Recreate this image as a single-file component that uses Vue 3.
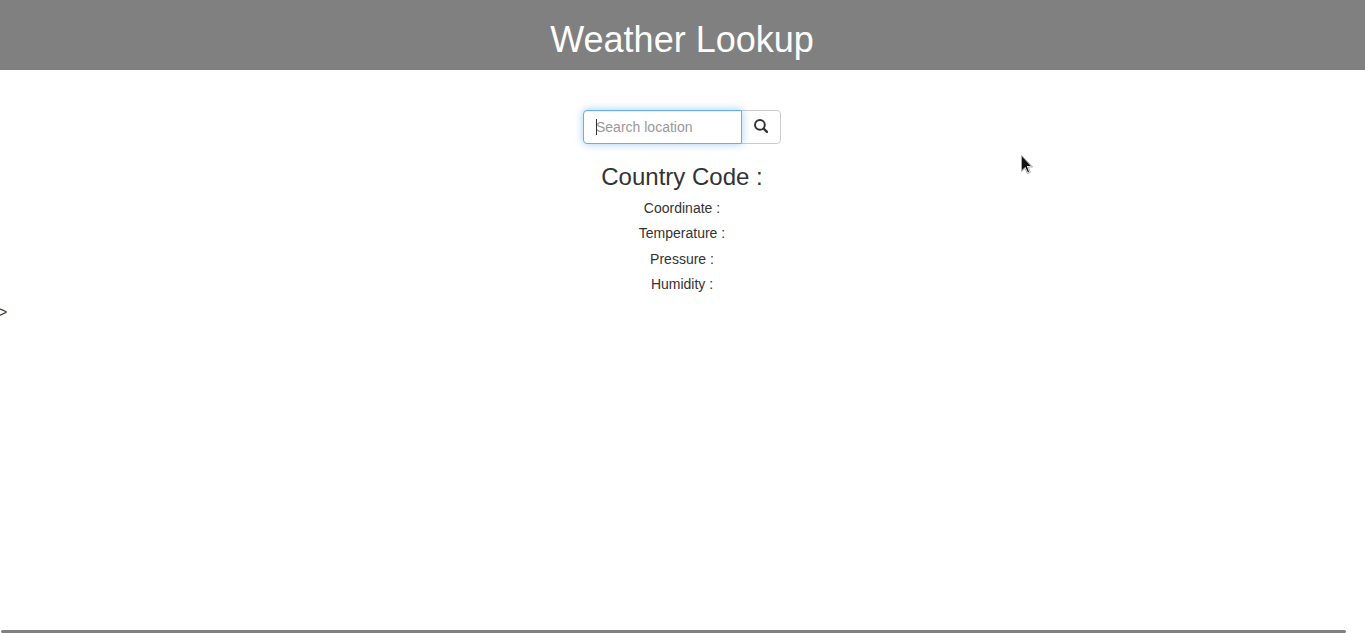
<script setup>
import { onMounted, ref } from 'vue'

const query = ref('')
const field = ref(null)
const details = ['Coordinate', 'Temperature', 'Pressure', 'Humidity']

onMounted(() => field.value.focus())
</script>

<template>
  <div class="page">
    <header class="banner">
      <h1>Weather Lookup</h1>
    </header>

    <main>
      <form class="search" @submit.prevent>
        <div class="field">
          <input ref="field" v-model="query" type="text" placeholder="Search location" aria-label="Search location">
          <span v-if="!query" class="caret"></span>
        </div>
        <button type="submit" aria-label="Search">
          <svg viewBox="0 0 14 14" width="14" height="14" aria-hidden="true">
            <circle cx="5.9" cy="5.9" r="4.9" fill="none" stroke="currentColor" stroke-width="1.9" />
            <path d="M9.6 9.6 L13 12.9" fill="none" stroke="currentColor" stroke-width="2.3" stroke-linecap="round" />
          </svg>
        </button>
      </form>

      <section class="result">
        <h3>Country Code :</h3>
        <h5 v-for="label in details" :key="label">{{ label }} :</h5>
      </section>
      <div class="stray">&gt;</div>
    </main>

    <div class="track"></div>

    <svg class="pointer" viewBox="0 0 14 21" width="14" height="21" aria-hidden="true">
      <path d="M1.5 1.5 V17.5 L5 14.3 L7.4 19.5 L10.4 18.3 L8.2 13 H12.6 Z" fill="#fff" stroke="#aaa" stroke-width="1" />
      <path d="M2 2.5 V16 L5.3 12.9 L7.9 18.2 L9 17.7 L6.8 12 H10.8 Z" fill="#111" />
    </svg>
  </div>
</template>

<style>
body {
  margin: 0;
}
</style>

<style scoped>
.page {
  position: relative;
  display: flex;
  flex-direction: column;
  box-sizing: border-box;
  min-height: 100vh;
  margin-left: -1px;
  background: #fff;
  color: #333;
  font: 14px/20px "Liberation Sans", Arial, sans-serif;
}

h1,
h3,
h5 {
  margin: 0;
  font-weight: 400;
  line-height: 1.1;
}

.banner {
  padding: 20px 0 10px;
  background: #808080;
  color: #fff;
  text-align: center;
}

h1 {
  font-size: 36px;
}

main {
  flex: 1;
  padding-top: 40px;
}

.search {
  display: flex;
  justify-content: center;
}

.field {
  position: relative;
  z-index: 1;
}

input {
  display: block;
  box-sizing: border-box;
  width: 159px;
  height: 34px;
  padding: 6px 12px;
  border: 1px solid #66afe9;
  border-radius: 4px 0 0 4px;
  outline: 0;
  background: #fff;
  box-shadow: inset 0 1px 1px rgba(0, 0, 0, 0.075), 0 0 8px rgba(102, 175, 233, 0.6);
  color: #555;
  caret-color: transparent;
  font: inherit;
}

input::placeholder {
  color: #999;
  opacity: 1;
}

.caret {
  position: absolute;
  top: 9px;
  left: 13px;
  width: 1px;
  height: 16px;
  background: #333;
  pointer-events: none;
}

button {
  display: flex;
  align-items: center;
  justify-content: center;
  box-sizing: border-box;
  width: 40px;
  height: 34px;
  margin-left: -1px;
  padding: 0 0 2px;
  border: 1px solid #ccc;
  border-radius: 0 4px 4px 0;
  background: #fff;
  color: #333;
}

.result {
  padding-top: 20px;
  text-align: center;
}

h3 {
  margin-bottom: 11px;
  font-size: 24px;
}

h5 {
  margin-bottom: 10px;
  font-size: 14px;
}

h5:last-child {
  margin-bottom: 9px;
}

.track {
  height: 3px;
  margin: 0 19px 0 2px;
  border-radius: 2px;
  background: #808080;
}

.pointer {
  position: absolute;
  top: 154px;
  left: 1021px;
}
</style>
